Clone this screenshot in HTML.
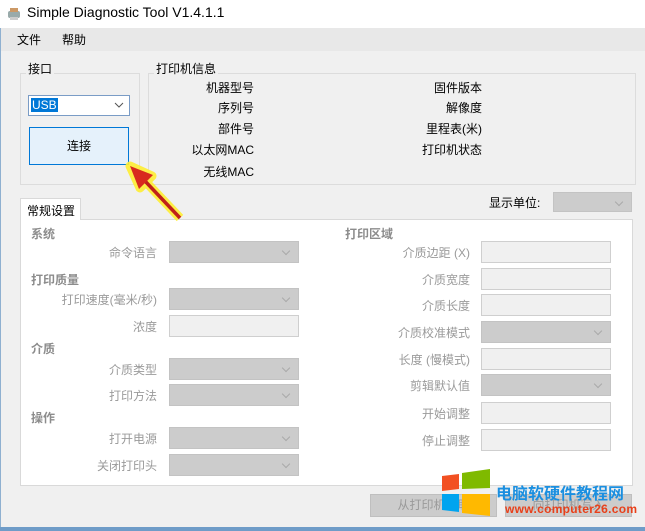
<!DOCTYPE html>
<html><head><meta charset="utf-8"><style>
*{margin:0;padding:0;box-sizing:border-box}
body{width:645px;height:531px;overflow:hidden;background:#f0f0f0;font-family:"Liberation Sans","Noto Sans CJK SC",sans-serif;font-size:12px;color:#000;position:relative}
.a{position:absolute;white-space:nowrap}
.r{text-align:right}
.g{color:#9a9a9a}
.h{color:#8c8c8c;font-weight:bold}
.cb{position:absolute;width:130px;height:22px;background:#cccccc;border:1px solid #c3c3c3}
.cb:after{content:"";position:absolute;right:9px;top:6px;width:5px;height:5px;border-right:1px solid #aaa;border-bottom:1px solid #aaa;transform:rotate(45deg)}
.tb{position:absolute;width:130px;height:22px;background:#f0f0f0;border:1px solid #cfcfcf}
.grp{position:absolute;border:1px solid #dcdcdc}
</style></head><body>
<div class="a" style="left:0;top:0;width:645px;height:28px;background:#fff"></div>
<svg class="a" style="left:6px;top:6px" width="16" height="16"><rect x="2" y="5" width="12" height="7" rx="2" fill="#9aa"/><rect x="4" y="2" width="8" height="4" fill="#c96"/><rect x="4" y="11" width="8" height="3" fill="#ccc"/></svg>
<div class="a" style="left:27px;top:4px;font-size:14px">Simple Diagnostic Tool V1.4.1.1</div>
<div class="a" style="left:0;top:28px;width:645px;height:23px;background:#e8e8e8"></div>
<div class="a" style="left:0;top:28px;width:1px;height:503px;background:#8fb0d0"></div>
<div class="a" style="left:17px;top:31px">文件</div>
<div class="a" style="left:62px;top:31px">帮助</div>

<div class="grp" style="left:20px;top:73px;width:120px;height:112px"></div>
<div class="a" style="left:26px;top:60px;background:#f0f0f0;padding:0 2px">接口</div>
<div class="a" style="left:28px;top:95px;width:102px;height:21px;background:#fff;border:1px solid #7a9cc6"></div>
<div class="a" style="left:31px;top:98px;background:#0078d7;color:#fff;line-height:14px;padding:0 1px">USB</div>
<svg class="a" style="left:114px;top:102px" width="10" height="6"><path d="M1 1L5 5L9 1" stroke="#555" fill="none"/></svg>
<div class="a" style="left:29px;top:127px;width:100px;height:38px;background:#e5f1fb;border:1px solid #0078d7;text-align:center;line-height:36px">连接</div>

<div class="grp" style="left:148px;top:73px;width:488px;height:112px"></div>
<div class="a" style="left:154px;top:60px;background:#f0f0f0;padding:0 2px">打印机信息</div>
<div class="a r" style="left:154px;width:100px;top:79px">机器型号</div>
<div class="a r" style="left:154px;width:100px;top:99px">序列号</div>
<div class="a r" style="left:154px;width:100px;top:120px">部件号</div>
<div class="a r" style="left:154px;width:100px;top:141px">以太网MAC</div>
<div class="a r" style="left:154px;width:100px;top:163px">无线MAC</div>
<div class="a r" style="left:382px;width:100px;top:79px">固件版本</div>
<div class="a r" style="left:382px;width:100px;top:99px">解像度</div>
<div class="a r" style="left:382px;width:100px;top:120px">里程表(米)</div>
<div class="a r" style="left:382px;width:100px;top:141px">打印机状态</div>

<div class="a" style="left:489px;top:194px">显示单位:</div>
<div class="cb" style="left:553px;top:192px;width:79px;height:20px"></div>

<div class="a" style="left:20px;top:219px;width:613px;height:267px;background:#fff;border:1px solid #d9d9d9"></div>
<div class="a" style="left:20px;top:198px;width:61px;height:22px;background:#fff;border:1px solid #d9d9d9;border-bottom:none;padding:3px 0 0 6px">常规设置</div>

<div class="a h" style="left:31px;top:225px">系统</div>
<div class="a h" style="left:31px;top:271px">打印质量</div>
<div class="a h" style="left:31px;top:340px">介质</div>
<div class="a h" style="left:31px;top:409px">操作</div>
<div class="a r g" style="left:57px;width:100px;top:244px">命令语言</div>
<div class="a r g" style="left:37px;width:120px;top:291px">打印速度(毫米/秒)</div>
<div class="a r g" style="left:57px;width:100px;top:318px">浓度</div>
<div class="a r g" style="left:57px;width:100px;top:361px">介质类型</div>
<div class="a r g" style="left:57px;width:100px;top:387px">打印方法</div>
<div class="a r g" style="left:57px;width:100px;top:430px">打开电源</div>
<div class="a r g" style="left:57px;width:100px;top:457px">关闭打印头</div>
<div class="cb" style="left:169px;top:241px"></div>
<div class="cb" style="left:169px;top:288px"></div>
<div class="tb" style="left:169px;top:315px"></div>
<div class="cb" style="left:169px;top:358px"></div>
<div class="cb" style="left:169px;top:384px"></div>
<div class="cb" style="left:169px;top:427px"></div>
<div class="cb" style="left:169px;top:454px"></div>

<div class="a h" style="left:345px;top:225px">打印区域</div>
<div class="a r g" style="left:350px;width:120px;top:244px">介质边距 (X)</div>
<div class="a r g" style="left:350px;width:120px;top:271px">介质宽度</div>
<div class="a r g" style="left:350px;width:120px;top:297px">介质长度</div>
<div class="a r g" style="left:350px;width:120px;top:324px">介质校准模式</div>
<div class="a r g" style="left:350px;width:120px;top:351px">长度 (慢模式)</div>
<div class="a r g" style="left:350px;width:120px;top:377px">剪辑默认值</div>
<div class="a r g" style="left:350px;width:120px;top:405px">开始调整</div>
<div class="a r g" style="left:350px;width:120px;top:432px">停止调整</div>
<div class="tb" style="left:481px;top:241px"></div>
<div class="tb" style="left:481px;top:268px"></div>
<div class="tb" style="left:481px;top:294px"></div>
<div class="cb" style="left:481px;top:321px"></div>
<div class="tb" style="left:481px;top:348px"></div>
<div class="cb" style="left:481px;top:374px"></div>
<div class="tb" style="left:481px;top:402px"></div>
<div class="tb" style="left:481px;top:429px"></div>

<div class="a g" style="left:370px;top:494px;width:127px;height:23px;background:#ccc;border:1px solid #bfbfbf;text-align:center;line-height:21px">从打印机读取</div>
<div class="a g" style="left:505px;top:494px;width:127px;height:23px;background:#ccc;border:1px solid #bfbfbf;text-align:center;line-height:21px">向打印机写入</div>
<div class="a" style="left:0;top:527px;width:645px;height:4px;background:#6f9cc8"></div>

<svg class="a" style="left:0;top:0" width="645" height="531">
<g stroke="#ffee33" stroke-width="9" fill="#ffee33" stroke-linejoin="round" opacity="0.9">
<line x1="144" y1="180" x2="180" y2="218"/><polygon points="130,166 152,176 140,188"/></g>
<line x1="144" y1="180" x2="180" y2="218" stroke="#c0201a" stroke-width="3.5"/>
<polygon points="130,166 153,175 139,189" fill="#d82a1e"/>
<polygon points="442,476 459,474 459,489 442,491" fill="#f25022"/>
<polygon points="462,473 490,469 490,488 462,489" fill="#7fba00"/>
<polygon points="442,494 459,494 459,512 442,510" fill="#00a4ef"/>
<polygon points="462,494 490,494 490,516 462,513" fill="#ffb900"/>
</svg>
<div class="a" style="left:496px;top:480px;font-size:16px;font-weight:bold;color:#1a8fe0">电脑软硬件教程网</div>
<div class="a" style="left:505px;top:502px;font-size:12px;font-weight:bold;color:#e8401a;letter-spacing:0.3px">www.computer26.com</div>
</body></html>
